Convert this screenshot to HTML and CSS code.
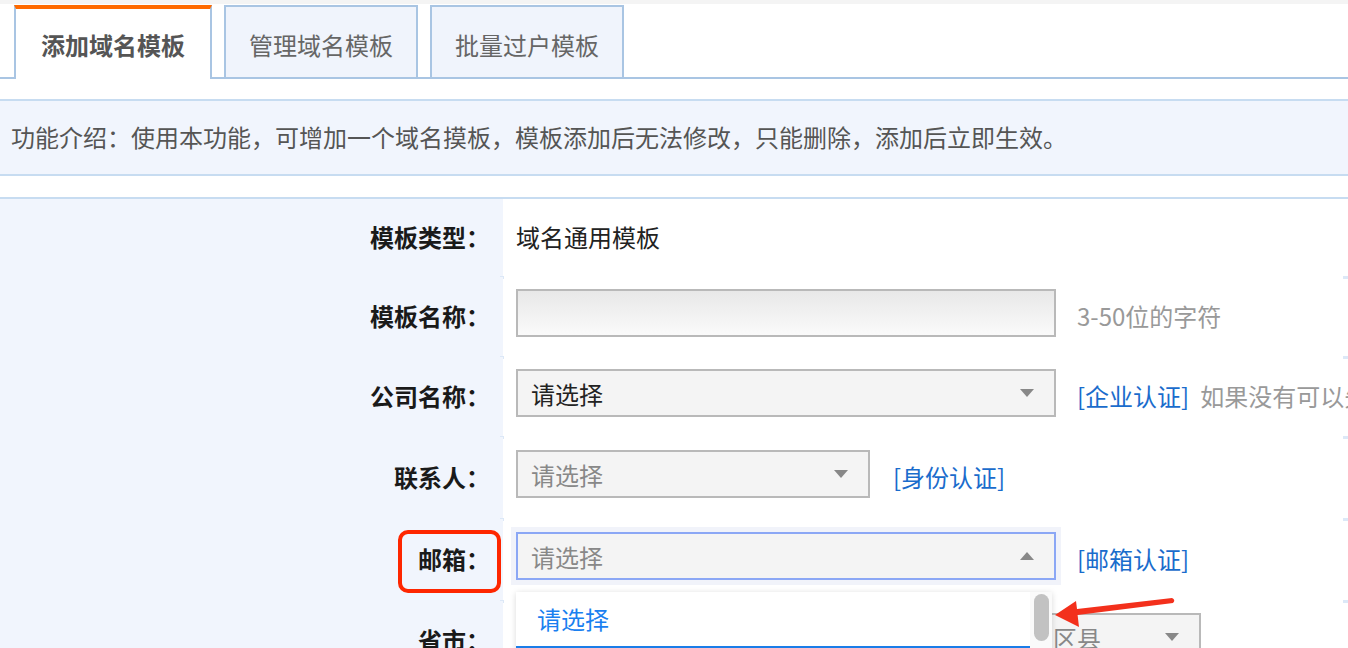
FILE: index.html
```html
<!DOCTYPE html>
<html lang="zh-CN">
<head>
    <meta charset="UTF-8">
    <meta name="viewport" content="width=device-width, initial-scale=1.0">
    <title>添加域名模板</title>
    <link rel="stylesheet" href="styles.css">
</head>
<body>
    <div class="page">
        <ul class="tabs">
            <li class="tab active">添加域名模板</li>
            <li class="tab">管理域名模板</li>
            <li class="tab">批量过户模板</li>
        </ul>

        <div class="intro">功能介绍：使用本功能，可增加一个域名摸板，模板添加后无法修改，只能删除，添加后立即生效。</div>

        <div class="form">
            <div class="row first">
                <div class="label">模板类型：</div>
                <div class="field">域名通用模板</div>
            </div>
            <div class="row">
                <div class="label">模板名称：</div>
                <div class="field">
                    <input class="text-input" type="text">
                    <span class="hint">3-50位的字符</span>
                </div>
            </div>
            <div class="row">
                <div class="label">公司名称：</div>
                <div class="field">
                    <div class="select wide"><span class="value dark">请选择</span><i class="caret"></i></div>
                    <a class="link">[企业认证]</a>
                    <span class="hint tight">如果没有可以先添加企业认证，添加后刷新页面即可</span>
                </div>
            </div>
            <div class="row tall">
                <div class="label">联系人：</div>
                <div class="field">
                    <div class="select medium"><span class="value">请选择</span><i class="caret"></i></div>
                    <a class="link">[身份认证]</a>
                </div>
            </div>
            <div class="row tall">
                <div class="label"><span class="marked">邮箱：</span></div>
                <div class="field">
                    <div class="select wide focused">
                        <span class="value">请选择</span><i class="caret up"></i>
                        <div class="dropdown">
                            <ul class="options">
                                <li class="option">请选择</li>
                                <li class="option current">test@example.com</li>
                                <li class="option">admin@example.com</li>
                            </ul>
                            <div class="scrollbar"><span class="thumb"></span></div>
                        </div>
                    </div>
                    <a class="link">[邮箱认证]</a>
                </div>
            </div>
            <div class="row">
                <div class="label">省市：</div>
                <div class="field">
                    <div class="select area"><span class="value">省份</span><i class="caret"></i></div>
                    <div class="select area"><span class="value">城市</span><i class="caret"></i></div>
                    <div class="select small"><span class="value">区县</span><i class="caret"></i></div>
                </div>
            </div>
        </div>
    </div>

    <svg class="pointer" width="130" height="40" viewBox="0 0 130 40">
        <path d="M122 4 Q126 6 123 9 L27.6 21 L29 33 L5 21 L26 7 L27 15 Z" fill="#f3301c"/>
    </svg>
</body>
</html>
```

FILE: styles.css
```css
html, body {
    margin: 0;
    height: 100%;
    overflow: hidden;
}
body {
    position: relative;
    background: #f4f4f4;
    font-family: "Noto Sans CJK SC", "Liberation Sans", sans-serif;
    font-size: 24px;
    color: #222;
}
.page {
    margin-top: 4px;
    background: #fff;
    min-height: 100%;
    padding-top: 1px;
}

/* tabs */
.tabs {
    display: flex;
    align-items: flex-start;
    gap: 12px;
    list-style: none;
    margin: 0;
    padding: 0 0 0 14px;
    height: 72px;
    border-bottom: 2px solid #a9c5e3;
}
.tab {
    box-sizing: border-box;
    height: 72px;
    padding: 26px 23px 0;
    line-height: 24px;
    border: 2px solid #a9c5e3;
    border-bottom: none;
    background: #f0f4fc;
    color: #666;
    cursor: pointer;
}
.tab.active {
    height: 74px;
    padding: 24px 25px 0;
    border-top: 4px solid #ff6a00;
    background: #fff;
    color: #555;
    font-weight: bold;
}

/* intro bar */
.intro {
    margin-top: 20px;
    height: 73px;
    line-height: 71px;
    padding-left: 11px;
    border-top: 2px solid #c7dcf1;
    border-bottom: 2px solid #c7dcf1;
    background: #f1f5fd;
    color: #555;
    white-space: nowrap;
}

/* form */
.form {
    margin-top: 21px;
    border-top: 2px solid #c7dcf1;
}
.row {
    position: relative;
    display: flex;
    height: 80px;
}
.row.first {
    height: 78px;
}
.row.tall {
    height: 82px;
}
.row::before,
.row::after {
    content: "";
    position: absolute;
    bottom: -2px;
    height: 3px;
    background: #dce8f7;
}
.row::before {
    left: 500px;
    width: 4px;
}
.row::after {
    right: 0;
    width: 5px;
}
.label {
    box-sizing: border-box;
    width: 503px;
    flex-shrink: 0;
    padding: 0 13px 4px 0;
    display: flex;
    align-items: center;
    justify-content: flex-end;
    background: #f1f5fd;
    font-weight: bold;
    color: #1a1a1a;
}
.marked {
    position: relative;
}
.marked::after {
    content: "";
    position: absolute;
    left: -20px;
    right: -11px;
    top: -11px;
    bottom: -17px;
    border: 4px solid #fe2600;
    border-radius: 10px;
}
.field {
    flex: 1;
    display: flex;
    align-items: center;
    padding: 0 0 4px 13px;
    white-space: nowrap;
    color: #222;
}
.text-input {
    box-sizing: border-box;
    width: 540px;
    height: 48px;
    margin: 0 0 4px;
    border: 2px solid #b9b9b9;
    background: linear-gradient(#e8e8e8, #fafafa);
    outline: none;
}
.hint {
    margin-left: 21px;
    color: #999;
}
.hint.tight {
    margin-left: 11px;
}
.link {
    margin-left: 21px;
    color: #1a6ccc;
    cursor: pointer;
}
.medium + .link {
    margin-left: 23px;
}

/* fake selects */
.select {
    position: relative;
    box-sizing: border-box;
    height: 48px;
    margin-bottom: 4px;
    padding-left: 13px;
    display: flex;
    align-items: center;
    border: 2px solid #b9b9b9;
    background: #f4f4f4;
    flex-shrink: 0;
}
.select.wide { width: 540px; }
.select.medium { width: 354px; }
.select.area { width: 249px; margin-right: 12px; }
.select.small { width: 163px; }
.select.focused {
    border-color: #8ba7f5;
    box-shadow: 0 0 0 5px #f1f3fa;
}
.value {
    color: #888;
}
.value.dark {
    color: #222;
}
.caret {
    margin-left: auto;
    margin-right: 20px;
    width: 0;
    height: 0;
    border-left: 7px solid transparent;
    border-right: 7px solid transparent;
    border-top: 8px solid #888;
}
.caret.up {
    border-top: none;
    border-bottom: 8px solid #888;
}
.dropdown {
    position: absolute;
    z-index: 5;
    left: -2px;
    top: calc(100% + 14px);
    width: 536px;
    height: 200px;
    background: #fff;
    box-shadow: 0 1px 6px rgba(0, 0, 0, 0.15);
    display: flex;
}
.options {
    flex: 1;
    list-style: none;
    margin: 0;
    padding: 0;
}
.option {
    height: 54px;
    line-height: 54px;
    padding-left: 21px;
    color: #1a80f0;
}
.option.current {
    background: #1a7de8;
    color: #fff;
}
.scrollbar {
    position: relative;
    width: 22px;
    background: #fafafa;
}
.thumb {
    position: absolute;
    top: 2px;
    left: 4px;
    width: 15px;
    height: 47px;
    border-radius: 8px;
    background: #c2c2c2;
}

/* annotation arrow */
.pointer {
    position: absolute;
    left: 1050px;
    top: 594px;
    z-index: 10;
}
```
